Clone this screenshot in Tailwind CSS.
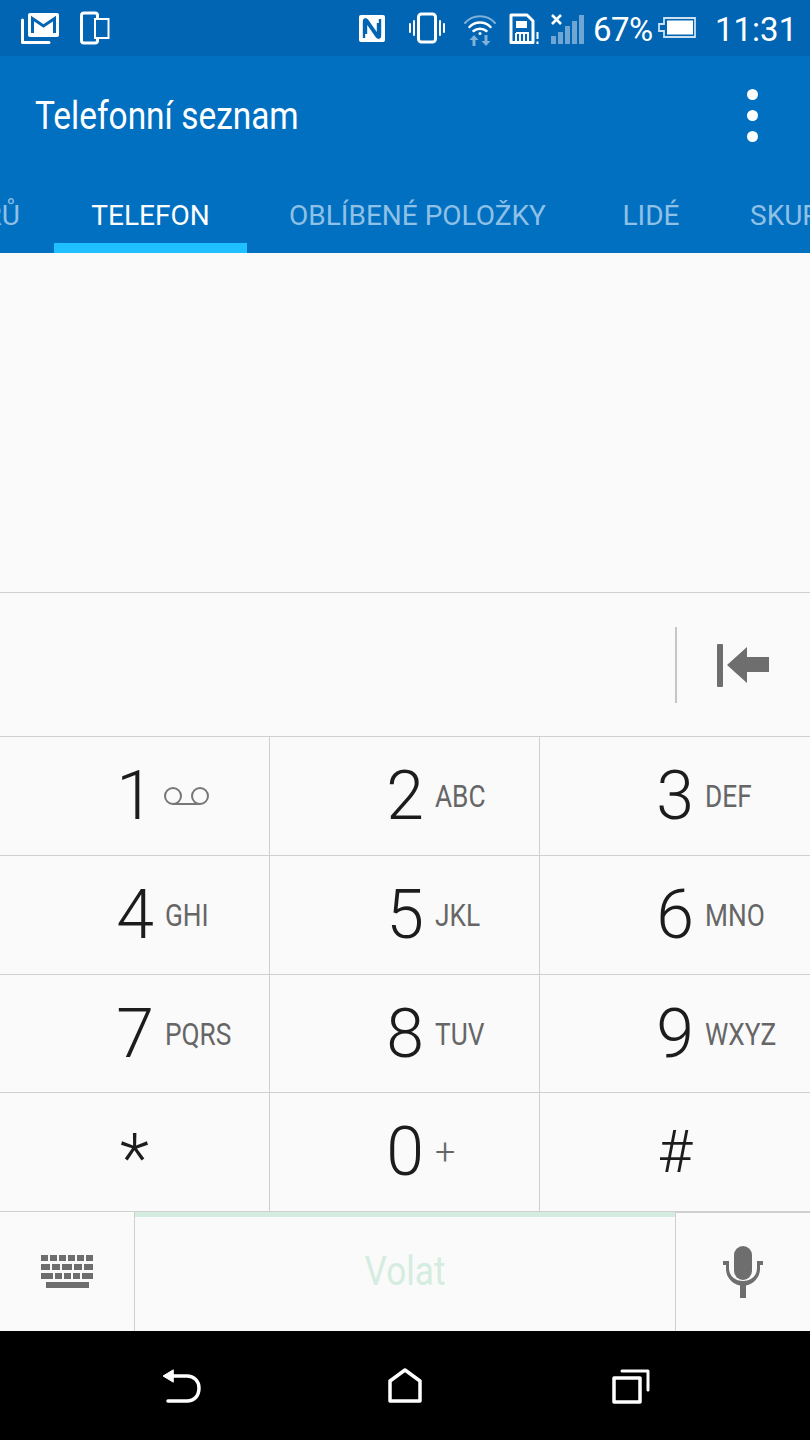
<!doctype html>
<html lang="cs"><head><meta charset="utf-8"><title>Telefonní seznam</title>
<script src="https://cdn.jsdelivr.net/npm/@tailwindcss/browser@4"></script></head>
<body class="m-0 bg-black">
<div class="w-[810px] h-[1440px] flex flex-col overflow-hidden font-['Roboto',sans-serif] bg-[#fafafa]">
  <!-- status bar -->
  <div class="h-[56px] shrink-0 bg-[#0165b3] flex items-center text-white relative">
    <svg class="ml-[20px] w-[41px] h-[34px]" viewBox="0 0 41 34" fill="none"><path d="M2.5 9V31.5H29" stroke="#fff" stroke-width="3" stroke-linecap="round" stroke-linejoin="round"/><rect x="8" y="2" width="31" height="24" rx="2" fill="#fff"/><path d="M12.5 22V7.5L23.5 15L34.5 7.5V22" stroke="#0165b3" stroke-width="3" fill="none"/><path d="M8 27H36" stroke="#0165b3" stroke-width="1"/></svg>
    <svg class="ml-[19px] w-[30px] h-[34px]" viewBox="0 0 30 34" fill="none"><rect x="1.5" y="2" width="16" height="30" rx="2.5" stroke="#fff" stroke-width="3"/><rect x="15" y="8" width="13.5" height="19" fill="#0165b3" stroke="#fff" stroke-width="2"/></svg>
    <div class="flex-1"></div>
    <svg class="w-[27px] h-[27px]" viewBox="0 0 27 27"><rect width="26" height="27" rx="2" fill="#fff"/><path d="M5 23V6C5 4 7 4 8 5L19 21V8M21 4V21C21 23 19 23 18 22L7 6V19" fill="none" stroke="#0165b3" stroke-width="2.4"/></svg>
    <svg class="ml-[23px] w-[36px] h-[32px]" viewBox="0 0 36 32" fill="none" stroke="#fff" stroke-linecap="round"><rect x="9.5" y="2" width="17" height="28" rx="3" stroke-width="3"/><path d="M5 9V23M1 12V20M31 9V23M35 12V20" stroke-width="2"/></svg>
    <svg class="ml-[18px] w-[34px] h-[34px] mt-[3px]" viewBox="0 0 34 34" fill="none" stroke="#7fb1d9" stroke-linecap="round"><path d="M2 10C10 1 24 1 32 10" stroke-width="2"/><path d="M6.500 14C12 8 22 8 27.500 14" stroke="#fff" stroke-width="2.500"/><path d="M10.500 18C14 15 20 15 23.500 18" stroke="#fff" stroke-width="2.500"/><circle cx="17" cy="20.500" r="1.500" fill="#fff" stroke="none"/><path d="M11 22L6.500 27H9.500V33H12.500V27H15.500Z" fill="#7fb1d9" stroke="none"/><path d="M23 33L18.500 28H21.500V22H24.500V28H27.500Z" fill="#7fb1d9" stroke="none"/></svg>
    <svg class="ml-[12px] w-[31px] h-[32px] mt-[2px]" viewBox="0 0 31 32" fill="none"><path d="M2 2H18L24 8V29.500H2Z" stroke="#fff" stroke-width="3" stroke-linejoin="round"/><path d="M7 8H18V15H7Z" fill="#fff"/><path d="M7 20H19V28M11 20V28M15 20V28M7 20V28" stroke="#fff" stroke-width="2"/><path d="M28.500 19V26" stroke="#fff" stroke-width="2"/><path d="M28.500 28.500V31" stroke="#fff" stroke-width="2"/></svg>
    <svg class="ml-[10px] w-[34px] h-[32px]" viewBox="0 0 34 32"><path d="M2 3L11 12M11 3L2 12" stroke="#fff" stroke-width="2.600"/><g fill="#6fa6d3"><rect x="1" y="24" width="5" height="8"/><rect x="8" y="20" width="5" height="12"/><rect x="15" y="14" width="5" height="18"/><rect x="22" y="9" width="5" height="23"/><rect x="29" y="3" width="5" height="29"/></g></svg>
    <span class="ml-[9px] text-[33px] leading-none w-[58px] tracking-[-0.5px] whitespace-nowrap mt-[2px]">67%</span>
    <svg class="ml-[6px] w-[40px] h-[24px]" viewBox="0 0 40 24" fill="none"><path d="M7 2H38V21H7V15H2V8H7Z" stroke="#fff" stroke-width="1.800" stroke-opacity=".8"/><rect x="10" y="4.500" width="26" height="14" fill="#fff"/></svg>
    <span class="ml-[18px] mr-[18px] text-[33px] leading-none w-[77px] whitespace-nowrap mt-[2px]">11:31</span>
  </div>
  <!-- app bar -->
  <div class="h-[197px] shrink-0 bg-[#0270c1] flex flex-col">
    <div class="flex-1 flex items-center justify-between pl-[35px] pr-[52px] pb-[8px]">
      <span class="text-white text-[38px] leading-none origin-left scale-x-[0.88] whitespace-nowrap">Telefonní seznam</span>
      <div class="flex flex-col gap-[10px]"><div class="w-[11px] h-[11px] rounded-full bg-white"></div><div class="w-[11px] h-[11px] rounded-full bg-white"></div><div class="w-[11px] h-[11px] rounded-full bg-white"></div></div>
    </div>
    <div class="h-[70px] flex overflow-hidden text-[28px] text-[#8fc0e6] whitespace-nowrap">
      <div class="w-[54px] shrink-0 flex justify-end items-center pr-[34px] pb-[5px]"><span class="shrink-0">HISTORIE HOVORŮ</span></div>
      <div class="w-[193px] shrink-0 flex justify-center items-center text-white border-b-[10px] border-[#1ec0ff] pt-[5px]"><span>TELEFON</span></div>
      <div class="ml-[1px] w-[339px] shrink-0 flex justify-center items-center pb-[5px]"><span>OBLÍBENÉ POLOŽKY</span></div>
      <div class="w-[128px] shrink-0 flex justify-center items-center pb-[5px]"><span>LIDÉ</span></div>
      <div class="pl-[35px] shrink-0 flex items-center pb-[5px]"><span>SKUPINY</span></div>
    </div>
  </div>
  <!-- empty list -->
  <div class="h-[340px] shrink-0 border-b border-[#cfcfcf]"></div>
  <!-- number field -->
  <div class="h-[144px] shrink-0 border-b border-[#cfcfcf] flex items-center justify-end">
    <div class="w-[2px] h-[76px] bg-[#c6c6c6] mr-[40px]"></div>
    <svg class="w-[52px] h-[44px] mr-[41px]" viewBox="0 0 52 44" fill="#6e6e6e"><rect x="0" y="1" width="6" height="43" rx="1"/><path d="M10 22L30 4V14H52V29H30V40Z"/></svg>
  </div>
  <!-- keypad -->
  <div class="grid grid-cols-[270px_270px_270px] grid-rows-[119px_119px_118px_119px] shrink-0 text-[#1c1c1c]">
    <div class="border-r border-b border-[#cfcfcf] flex items-center"><span class="w-[60px] ml-[105px] text-center text-[68px] font-light leading-none">1</span><svg class="w-[48px] h-[20px] -ml-[2px]" viewBox="0 0 48 20" fill="none" stroke="#777" stroke-width="2"><circle cx="10" cy="10" r="8"/><circle cx="37" cy="10" r="8"/><path d="M10 18H37"/></svg></div>
    <div class="border-r border-b border-[#cfcfcf] flex items-center"><span class="w-[60px] ml-[105px] text-center text-[68px] font-light leading-none">2</span><span class="text-[32px] text-[#666] leading-none origin-left scale-x-[0.82] whitespace-nowrap">ABC</span></div>
    <div class="border-b border-[#cfcfcf] flex items-center"><span class="w-[60px] ml-[105px] text-center text-[68px] font-light leading-none">3</span><span class="text-[32px] text-[#666] leading-none origin-left scale-x-[0.82] whitespace-nowrap">DEF</span></div>
    <div class="border-r border-b border-[#cfcfcf] flex items-center"><span class="w-[60px] ml-[105px] text-center text-[68px] font-light leading-none">4</span><span class="text-[32px] text-[#666] leading-none origin-left scale-x-[0.82] whitespace-nowrap">GHI</span></div>
    <div class="border-r border-b border-[#cfcfcf] flex items-center"><span class="w-[60px] ml-[105px] text-center text-[68px] font-light leading-none">5</span><span class="text-[32px] text-[#666] leading-none origin-left scale-x-[0.82] whitespace-nowrap">JKL</span></div>
    <div class="border-b border-[#cfcfcf] flex items-center"><span class="w-[60px] ml-[105px] text-center text-[68px] font-light leading-none">6</span><span class="text-[32px] text-[#666] leading-none origin-left scale-x-[0.82] whitespace-nowrap">MNO</span></div>
    <div class="border-r border-b border-[#cfcfcf] flex items-center"><span class="w-[60px] ml-[105px] text-center text-[68px] font-light leading-none">7</span><span class="text-[32px] text-[#666] leading-none origin-left scale-x-[0.82] whitespace-nowrap">PQRS</span></div>
    <div class="border-r border-b border-[#cfcfcf] flex items-center"><span class="w-[60px] ml-[105px] text-center text-[68px] font-light leading-none">8</span><span class="text-[32px] text-[#666] leading-none origin-left scale-x-[0.82] whitespace-nowrap">TUV</span></div>
    <div class="border-b border-[#cfcfcf] flex items-center"><span class="w-[60px] ml-[105px] text-center text-[68px] font-light leading-none">9</span><span class="text-[32px] text-[#666] leading-none origin-left scale-x-[0.82] whitespace-nowrap">WXYZ</span></div>
    <div class="border-r border-b border-[#cfcfcf] flex items-center justify-center"><span class="text-[68px] font-light leading-none pt-[14px]">*</span></div>
    <div class="border-r border-b border-[#cfcfcf] flex items-center"><span class="w-[60px] ml-[105px] text-center text-[68px] font-light leading-none">0</span><span class="text-[36px] font-light text-[#666] leading-none">+</span></div>
    <div class="border-b border-[#cfcfcf] flex items-center justify-center"><span class="text-[60px] font-light leading-none">#</span></div>
  </div>
  <!-- action row -->
  <div class="h-[119px] shrink-0 flex">
    <div class="w-[135px] border-r border-[#cfcfcf] flex items-center justify-center">
      <svg class="w-[54px] h-[34px]" viewBox="0 0 54 34" fill="#6e6e6e"><rect x="1" y="0" width="7" height="6"/><rect x="10" y="0" width="7" height="6"/><rect x="19" y="0" width="7" height="6"/><rect x="28" y="0" width="7" height="6"/><rect x="37" y="0" width="7" height="6"/><rect x="46" y="0" width="7" height="6"/><rect x="1" y="9" width="9" height="6"/><rect x="12" y="9" width="8" height="6"/><rect x="22" y="9" width="10" height="6"/><rect x="34" y="9" width="8" height="6"/><rect x="44" y="9" width="9" height="6"/><rect x="1" y="18" width="12" height="6"/><rect x="15" y="18" width="7" height="6"/><rect x="24" y="18" width="7" height="6"/><rect x="33" y="18" width="7" height="6"/><rect x="42" y="18" width="11" height="6"/><rect x="6" y="27" width="43" height="6"/></svg>
    </div>
    <div class="w-[540px] border-t-[5px] border-[#d5ece0] flex items-center justify-center pb-[5px]"><span class="text-[40px] text-[#d5ece0] leading-none origin-center scale-x-[0.88]">Volat</span></div>
    <div class="w-[135px] border-l border-t border-[#cfcfcf] flex items-center justify-center">
      <svg class="w-[40px] h-[52px]" viewBox="0 0 40 52"><rect x="11" y="0" width="18" height="34" rx="9" fill="#6e6e6e"/><path d="M0 15H6V22C6 30 12 35 20 35C28 35 34 30 34 22V15H40V19H37V23C37 31 31 38 23 39.500V52H17V39.500C9 38 3 31 3 23V19H0Z" fill="#6e6e6e"/></svg>
    </div>
  </div>
  <!-- nav bar -->
  <div class="flex-1 bg-black relative flex items-center">
    <svg class="ml-[160px] w-[42px] h-[36px]" viewBox="0 0 42 36" fill="none" stroke="#fff" stroke-width="3.500" stroke-linecap="round" stroke-linejoin="round"><path d="M9 8H27C34 8 39 13 39 20C39 28 34 33 27 33H8"/><path d="M13 2L3 8L13 14Z" fill="#fff" stroke-width="1"/></svg>
    <svg class="ml-[186px] w-[34px] h-[36px]" viewBox="0 0 34 36" fill="none" stroke="#fff" stroke-width="3.500" stroke-linejoin="round"><path d="M2 13L17 2L32 13V33H2Z"/></svg>
    <svg class="ml-[190px] w-[38px] h-[36px]" viewBox="0 0 38 36" fill="none" stroke="#fff" stroke-linejoin="round" stroke-linecap="round"><rect x="2" y="10" width="26" height="24" stroke-width="3.500"/><path d="M10 3H36V22" stroke-width="3"/></svg>
  </div>
</div>
</body></html>
